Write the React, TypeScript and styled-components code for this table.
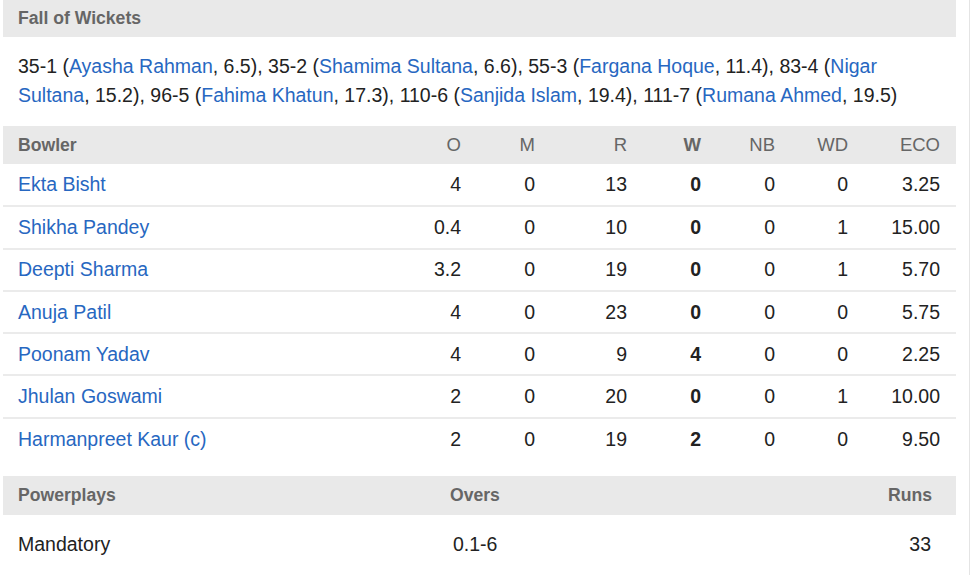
import { Fragment, ReactElement } from 'react'
import styled, { createGlobalStyle } from 'styled-components'

const GlobalStyle = createGlobalStyle`
  html, body {
    margin: 0;
    padding: 0;
    background: #fff;
  }
  body {
    font-family: "Liberation Sans", Arial, sans-serif;
    color: #222;
  }
`

const Page = styled.div`
  width: 966px;
  min-height: 575px;
  padding-left: 3px;
  border-right: 1px solid #e4e4e4;
`

const Panel = styled.div`
  width: 953px;
`

const SectionTitle = styled.div`
  background: #e9e9e9;
  height: 37px;
  line-height: 37px;
  padding: 0 15px;
  font-size: 17.6px;
  font-weight: bold;
  color: #666;
`

const Wickets = styled.div`
  padding: 15px 15px 16px;
  font-size: 19.5px;
  line-height: 29px;
  color: #222;
`

const Link = styled.a`
  color: #2767c1;
  text-decoration: none;
`

const Table = styled.table`
  width: 953px;
  border-collapse: collapse;
  table-layout: fixed;
  font-size: 19.5px;
`

const HeadCell = styled.th<{ bold?: boolean; left?: boolean }>`
  background: #e9e9e9;
  height: 38px;
  padding: 0 16px 0 ${({ left }) => (left ? '15px' : '0')};
  text-align: ${({ left }) => (left ? 'left' : 'right')};
  font-size: ${({ left }) => (left ? '17.6px' : '18.5px')};
  font-weight: ${({ bold }) => (bold ? 'bold' : 'normal')};
  color: #666;
`

const Row = styled.tr<{ last?: boolean }>`
  height: 42.3px;
  border-bottom: ${({ last }) => (last ? 'none' : '2px solid #ebebeb')};
`

const Cell = styled.td<{ bold?: boolean; left?: boolean }>`
  padding: 0 16px 0 ${({ left }) => (left ? '15px' : '0')};
  text-align: ${({ left }) => (left ? 'left' : 'right')};
  font-weight: ${({ bold }) => (bold ? 'bold' : 'normal')};
  color: #222;
  white-space: nowrap;
`

const PowerHead = styled.div`
  margin-top: 16px;
  display: grid;
  grid-template-columns: 432px 1fr auto;
  align-items: center;
  background: #e9e9e9;
  height: 39px;
  padding: 0 24px 0 15px;
  font-size: 17.6px;
  font-weight: bold;
  color: #666;
`

const PowerRow = styled.div`
  display: grid;
  grid-template-columns: 435px 1fr auto;
  align-items: center;
  height: 58px;
  padding: 0 25px 0 15px;
  font-size: 19.5px;
  color: #222;
`

interface Bowler {
  name: string
  o: string
  m: string
  r: string
  w: string
  nb: string
  wd: string
  eco: string
}

const bowlers: Bowler[] = [
  { name: 'Ekta Bisht', o: '4', m: '0', r: '13', w: '0', nb: '0', wd: '0', eco: '3.25' },
  { name: 'Shikha Pandey', o: '0.4', m: '0', r: '10', w: '0', nb: '0', wd: '1', eco: '15.00' },
  { name: 'Deepti Sharma', o: '3.2', m: '0', r: '19', w: '0', nb: '0', wd: '1', eco: '5.70' },
  { name: 'Anuja Patil', o: '4', m: '0', r: '23', w: '0', nb: '0', wd: '0', eco: '5.75' },
  { name: 'Poonam Yadav', o: '4', m: '0', r: '9', w: '4', nb: '0', wd: '0', eco: '2.25' },
  { name: 'Jhulan Goswami', o: '2', m: '0', r: '20', w: '0', nb: '0', wd: '1', eco: '10.00' },
  { name: 'Harmanpreet Kaur (c)', o: '2', m: '0', r: '19', w: '2', nb: '0', wd: '0', eco: '9.50' }
]

const wickets: Array<[string, string, string]> = [
  ['35-1', 'Ayasha Rahman', '6.5'],
  ['35-2', 'Shamima Sultana', '6.6'],
  ['55-3', 'Fargana Hoque', '11.4'],
  ['83-4', 'Nigar Sultana', '15.2'],
  ['96-5', 'Fahima Khatun', '17.3'],
  ['110-6', 'Sanjida Islam', '19.4'],
  ['111-7', 'Rumana Ahmed', '19.5']
]

export default function App (): ReactElement {
  return (
    <Page>
      <GlobalStyle />
      <Panel>
        <SectionTitle>Fall of Wickets</SectionTitle>
        <Wickets>
          {wickets.map(([score, name, over], i) => (
            <Fragment key={score}>
              {score} (<Link href="#">{name}</Link>, {over}){i < wickets.length - 1 ? ', ' : ''}
            </Fragment>
          ))}
        </Wickets>
        <Table>
          <colgroup>
            <col style={{ width: 400 }} />
            <col style={{ width: 74 }} />
            <col style={{ width: 74 }} />
            <col style={{ width: 92 }} />
            <col style={{ width: 74 }} />
            <col style={{ width: 74 }} />
            <col style={{ width: 73 }} />
            <col style={{ width: 92 }} />
          </colgroup>
          <thead>
            <tr>
              <HeadCell left bold>Bowler</HeadCell>
              <HeadCell>O</HeadCell>
              <HeadCell>M</HeadCell>
              <HeadCell>R</HeadCell>
              <HeadCell bold>W</HeadCell>
              <HeadCell>NB</HeadCell>
              <HeadCell>WD</HeadCell>
              <HeadCell>ECO</HeadCell>
            </tr>
          </thead>
          <tbody>
            {bowlers.map((b, i) => (
              <Row key={b.name} last={i === bowlers.length - 1}>
                <Cell left><Link href="#">{b.name}</Link></Cell>
                <Cell>{b.o}</Cell>
                <Cell>{b.m}</Cell>
                <Cell>{b.r}</Cell>
                <Cell bold>{b.w}</Cell>
                <Cell>{b.nb}</Cell>
                <Cell>{b.wd}</Cell>
                <Cell>{b.eco}</Cell>
              </Row>
            ))}
          </tbody>
        </Table>
        <PowerHead>
          <span>Powerplays</span>
          <span>Overs</span>
          <span>Runs</span>
        </PowerHead>
        <PowerRow>
          <span>Mandatory</span>
          <span>0.1-6</span>
          <span>33</span>
        </PowerRow>
      </Panel>
    </Page>
  )
}
